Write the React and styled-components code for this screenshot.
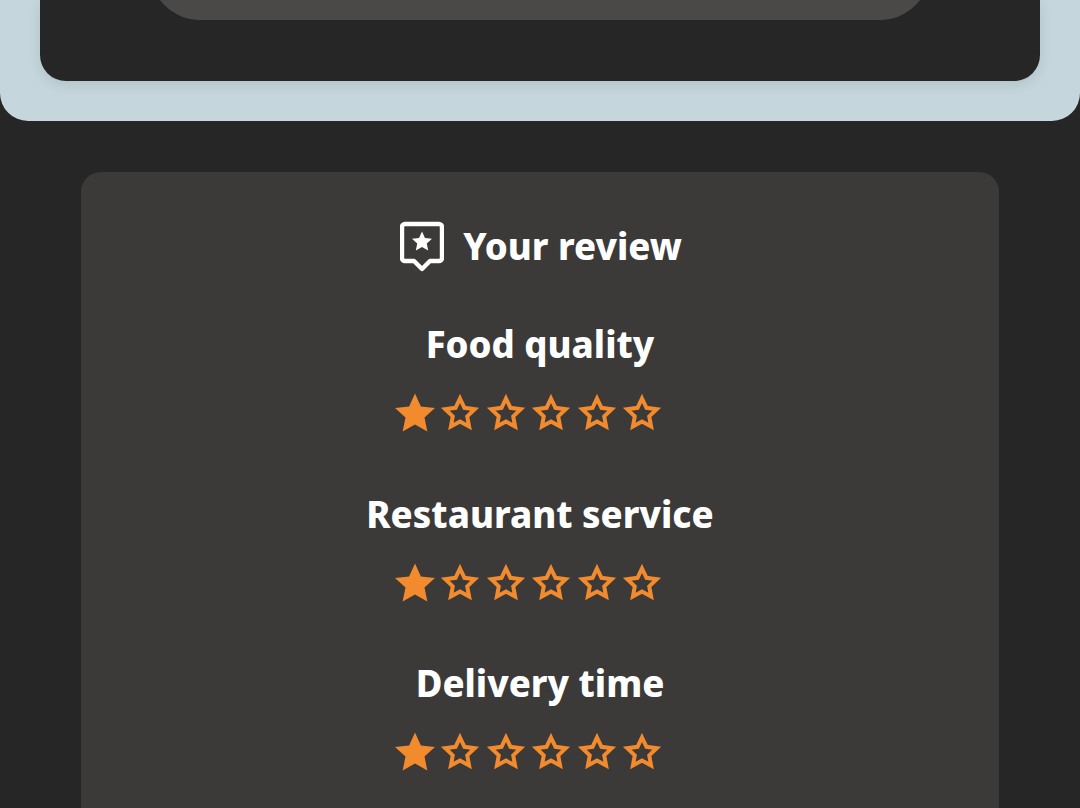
import React from 'react';
import styled, { createGlobalStyle } from 'styled-components';

const GlobalStyle = createGlobalStyle`
  html, body {
    margin: 0;
    padding: 0;
    height: 100%;
    overflow: hidden;
    background: #262626;
  }
`;

const Page = styled.div`
  height: 808px;
  overflow: hidden;
  background: #262626;
  font-family: "Noto Sans", "Open Sans", sans-serif;
  color: #fff;
`;

const Hero = styled.div`
  height: 121px;
  box-sizing: border-box;
  padding: 0 40px 40px;
  background: #c5d7dc;
  border-radius: 0 0 28px 28px;
`;

const HeroCard = styled.div`
  height: 81px;
  background: #262626;
  border-radius: 0 0 26px 26px;
  box-shadow: 0 4px 12px rgba(40, 60, 70, 0.12);
  padding: 0 110px;
  overflow: hidden;
`;

const HeroInner = styled.div`
  height: 70px;
  margin-top: -50px;
  background: #4a4948;
  border-radius: 0 0 50px 50px;
`;

const ReviewCard = styled.section`
  margin: 51px 81px 0;
  padding-top: 47px;
  height: 700px;
  box-sizing: border-box;
  background: #3b3a38;
  border-radius: 20px;
  display: flex;
  flex-direction: column;
  align-items: center;
`;

const Heading = styled.h2`
  margin: 0 0 46px 2px;
  height: 54px;
  display: flex;
  align-items: center;
  gap: 19px;
  font-size: 36.5px;
  font-weight: 800;
  line-height: 54px;
`;

const Group = styled.div`
  display: flex;
  flex-direction: column;
  align-items: center;
  margin-bottom: 55.5px;
`;

const Label = styled.div`
  font-size: 36.5px;
  font-weight: 800;
  line-height: 50px;
  margin-bottom: 24px;
`;

const Stars = styled.div`
  display: flex;
  gap: 5.5px;
  height: 40px;
  margin-right: 23px;
`;

const StarSvg = styled.svg`
  display: block;
  width: 40px;
  height: 40px;
`;

const IconSvg = styled.svg`
  display: block;
  width: 44px;
  height: 52px;
  margin-top: 2px;
`;

// five pointed star, outer radius R and inner radius r around (cx, cy)
const starPath = (cx, cy, R, r) => {
  const pts = [];
  for (let i = 0; i < 10; i++) {
    const rad = i % 2 === 0 ? R : r;
    const a = (Math.PI / 5) * i - Math.PI / 2;
    pts.push(`${(cx + rad * Math.cos(a)).toFixed(2)} ${(cy + rad * Math.sin(a)).toFixed(2)}`);
  }
  return `M${pts.join(' L')} Z`;
};

function Star({ filled }) {
  return (
    <StarSvg viewBox="0 0 40 40">
      {filled ? (
        <path d={starPath(20, 21.5, 21, 10)} fill="#f28a2e" />
      ) : (
        <path
          d={starPath(20, 21, 15.5, 7.6)}
          fill="none"
          stroke="#f28a2e"
          strokeWidth="4"
          strokeLinejoin="miter"
        />
      )}
    </StarSvg>
  );
}

function ReviewIcon() {
  return (
    <IconSvg viewBox="0 0 44 52">
      <path
        d="M5 3 H39 A3 3 0 0 1 42 6 V37 A3 3 0 0 1 39 40 H30 L22 48 L14 40 H5 A3 3 0 0 1 2 37 V6 A3 3 0 0 1 5 3 Z"
        fill="none"
        stroke="#fff"
        strokeWidth="4.4"
        strokeLinejoin="round"
      />
      <path d={starPath(22, 21, 10.5, 5)} fill="#fff" />
    </IconSvg>
  );
}

const categories = ['Food quality', 'Restaurant service', 'Delivery time'];

export default function App() {
  return (
    <Page>
      <GlobalStyle />
      <Hero>
        <HeroCard>
          <HeroInner />
        </HeroCard>
      </Hero>
      <ReviewCard>
        <Heading>
          <ReviewIcon />
          Your review
        </Heading>
        {categories.map(name => (
          <Group key={name}>
            <Label>{name}</Label>
            <Stars>
              {[0, 1, 2, 3, 4, 5].map(i => (
                <Star key={i} filled={i === 0} />
              ))}
            </Stars>
          </Group>
        ))}
      </ReviewCard>
    </Page>
  );
}
